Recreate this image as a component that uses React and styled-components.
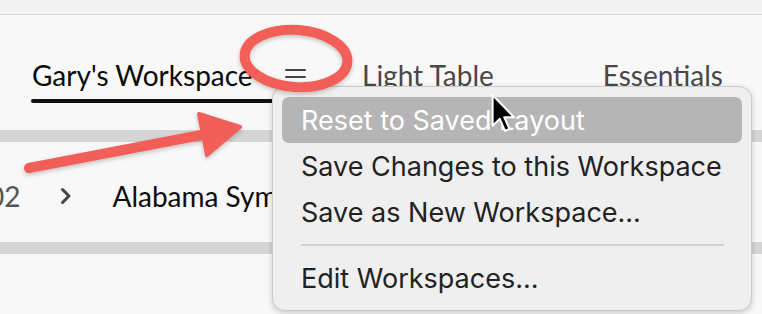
import React from "react";
import styled, { createGlobalStyle } from "styled-components";

const Global = createGlobalStyle`
  html, body { margin: 0; padding: 0; background: #f8f8f8; overflow: hidden; }
  #root { width: 762px; height: 314px; }
`;

const Page = styled.div`
  position: relative;
  width: 762px;
  height: 314px;
  overflow: hidden;
  background: #f8f8f8;
  font-family: Lato, "Open Sans", sans-serif;
`;

const TopStrip = styled.div`
  height: 14px;
  background: #f3f3f3;
  border-bottom: 1px solid #d9d9d9;
`;

const TabBar = styled.div`
  height: 115px;
  display: flex;
  align-items: flex-start;
  padding: 43px 39px 0 32px;
  box-sizing: border-box;
`;

const TabGroup = styled.div`
  display: flex;
  flex-direction: column;
`;

const TabRow = styled.div`
  display: flex;
  align-items: center;
`;

const Tab = styled.div`
  font-size: 28px;
  line-height: 34px;
  color: ${(p) => (p.$active ? "#0a0a0a" : "#484848")};
  white-space: nowrap;
  margin-left: ${(p) => p.$ml || 0}px;
`;

const Underline = styled.div`
  height: 4px;
  border-radius: 2px;
  background: #111;
  margin-top: 7px;
  margin-left: -1px;
  width: 290px;
`;

const MenuButton = styled.div`
  width: 21px;
  height: 16px;
  margin-left: 32px;
  margin-top: 4px;
  display: flex;
  flex-direction: column;
  justify-content: space-between;
  span {
    display: block;
    height: 2px;
    background: #444;
    border-radius: 1px;
  }
`;

const Spacer = styled.div`
  flex: 1;
`;

const Band = styled.div`
  height: 12px;
  background: #d5d5d5;
`;

const PathRow = styled.div`
  height: 100px;
  display: flex;
  align-items: center;
  padding-top: 8px;
  box-sizing: border-box;
  white-space: nowrap;
`;

const Crumb = styled.span`
  font-size: 28px;
  color: ${(p) => (p.$dim ? "#555" : "#0d0d0d")};
  margin-left: ${(p) => p.$ml || 0}px;
`;

const Chevron = styled.svg`
  margin-left: 40px;
  width: 12px;
  height: 18px;
`;

const Menu = styled.div`
  position: absolute;
  left: 272px;
  top: 86px;
  width: 480px;
  height: 225px;
  box-sizing: border-box;
  padding: 10px 9px;
  background: #efefef;
  border: 1px solid #cacaca;
  border-radius: 13px;
  box-shadow: 0 2px 6px rgba(0, 0, 0, 0.18);
  font-family: Inter, "Liberation Sans", sans-serif;
`;

const Item = styled.div`
  height: 46px;
  line-height: 46px;
  padding-left: 19px;
  padding-top: 1px;
  box-sizing: border-box;
  border-radius: 7px;
  font-size: 27px;
  color: ${(p) => (p.$hl ? "#fff" : "#222")};
  background: ${(p) => (p.$hl ? "#b5b5b5" : "transparent")};
  white-space: nowrap;
`;

const Separator = styled.div`
  height: 2px;
  background: #d3d3d3;
  margin: 9px 18px 9px 19px;
`;

const Overlay = styled.svg`
  position: absolute;
  left: 0;
  top: 0;
  width: 762px;
  height: 314px;
  pointer-events: none;
`;

const Cursor = styled.svg`
  position: absolute;
  left: 490px;
  top: 93px;
  width: 26px;
  height: 42px;
`;

export default function App() {
  return (
    <>
      <Global />
      <Page>
        <TopStrip />
        <TabBar>
          <TabGroup>
            <TabRow>
              <Tab $active>Gary's Workspace</Tab>
              <MenuButton>
                <span />
                <span />
                <span />
              </MenuButton>
            </TabRow>
            <Underline />
          </TabGroup>
          <Tab $ml={41}>Light Table</Tab>
          <Spacer />
          <Tab>Essentials</Tab>
        </TabBar>
        <Band />
        <PathRow>
          <Crumb $dim $ml={-12}>02</Crumb>
          <Chevron viewBox="0 0 12 18">
            <path d="M2.5 2.5 L9 9 L2.5 15.5" fill="none" stroke="#444" strokeWidth="3" strokeLinecap="round" strokeLinejoin="round" />
          </Chevron>
          <Crumb $ml={40}>Alabama Symphony Orchestra</Crumb>
        </PathRow>
        <Band />

        <Menu>
          <Item $hl>Reset to Saved Layout</Item>
          <Item>Save Changes to this Workspace</Item>
          <Item>Save as New Workspace...</Item>
          <Separator />
          <Item>Edit Workspaces...</Item>
        </Menu>

        <Overlay viewBox="0 0 762 314">
          <defs>
            <filter id="sh" x="-20%" y="-20%" width="140%" height="140%">
              <feDropShadow dx="0" dy="2" stdDeviation="2" floodColor="#000" floodOpacity="0.22" />
            </filter>
          </defs>
          <g filter="url(#sh)">
            <ellipse cx="296" cy="58.5" rx="51.5" ry="28.5" fill="none" stroke="#f25f58" strokeWidth="10" transform="rotate(4 296 58.5)" />
            <line x1="29" y1="168" x2="212" y2="133" stroke="#f25f58" strokeWidth="10" strokeLinecap="round" />
            <polygon points="240,127 199,114 207,155" fill="#f25f58" stroke="#f25f58" strokeWidth="4" strokeLinejoin="round" />
          </g>
        </Overlay>

        <Cursor viewBox="0 0 20 32">
          <path d="M2 1.5 L2 25 L7.5 19.8 L11.5 29 L15 27.5 L11 18.5 L18.5 18.5 Z" fill="#000" stroke="#fff" strokeWidth="1.6" strokeLinejoin="round" />
        </Cursor>
      </Page>
    </>
  );
}
